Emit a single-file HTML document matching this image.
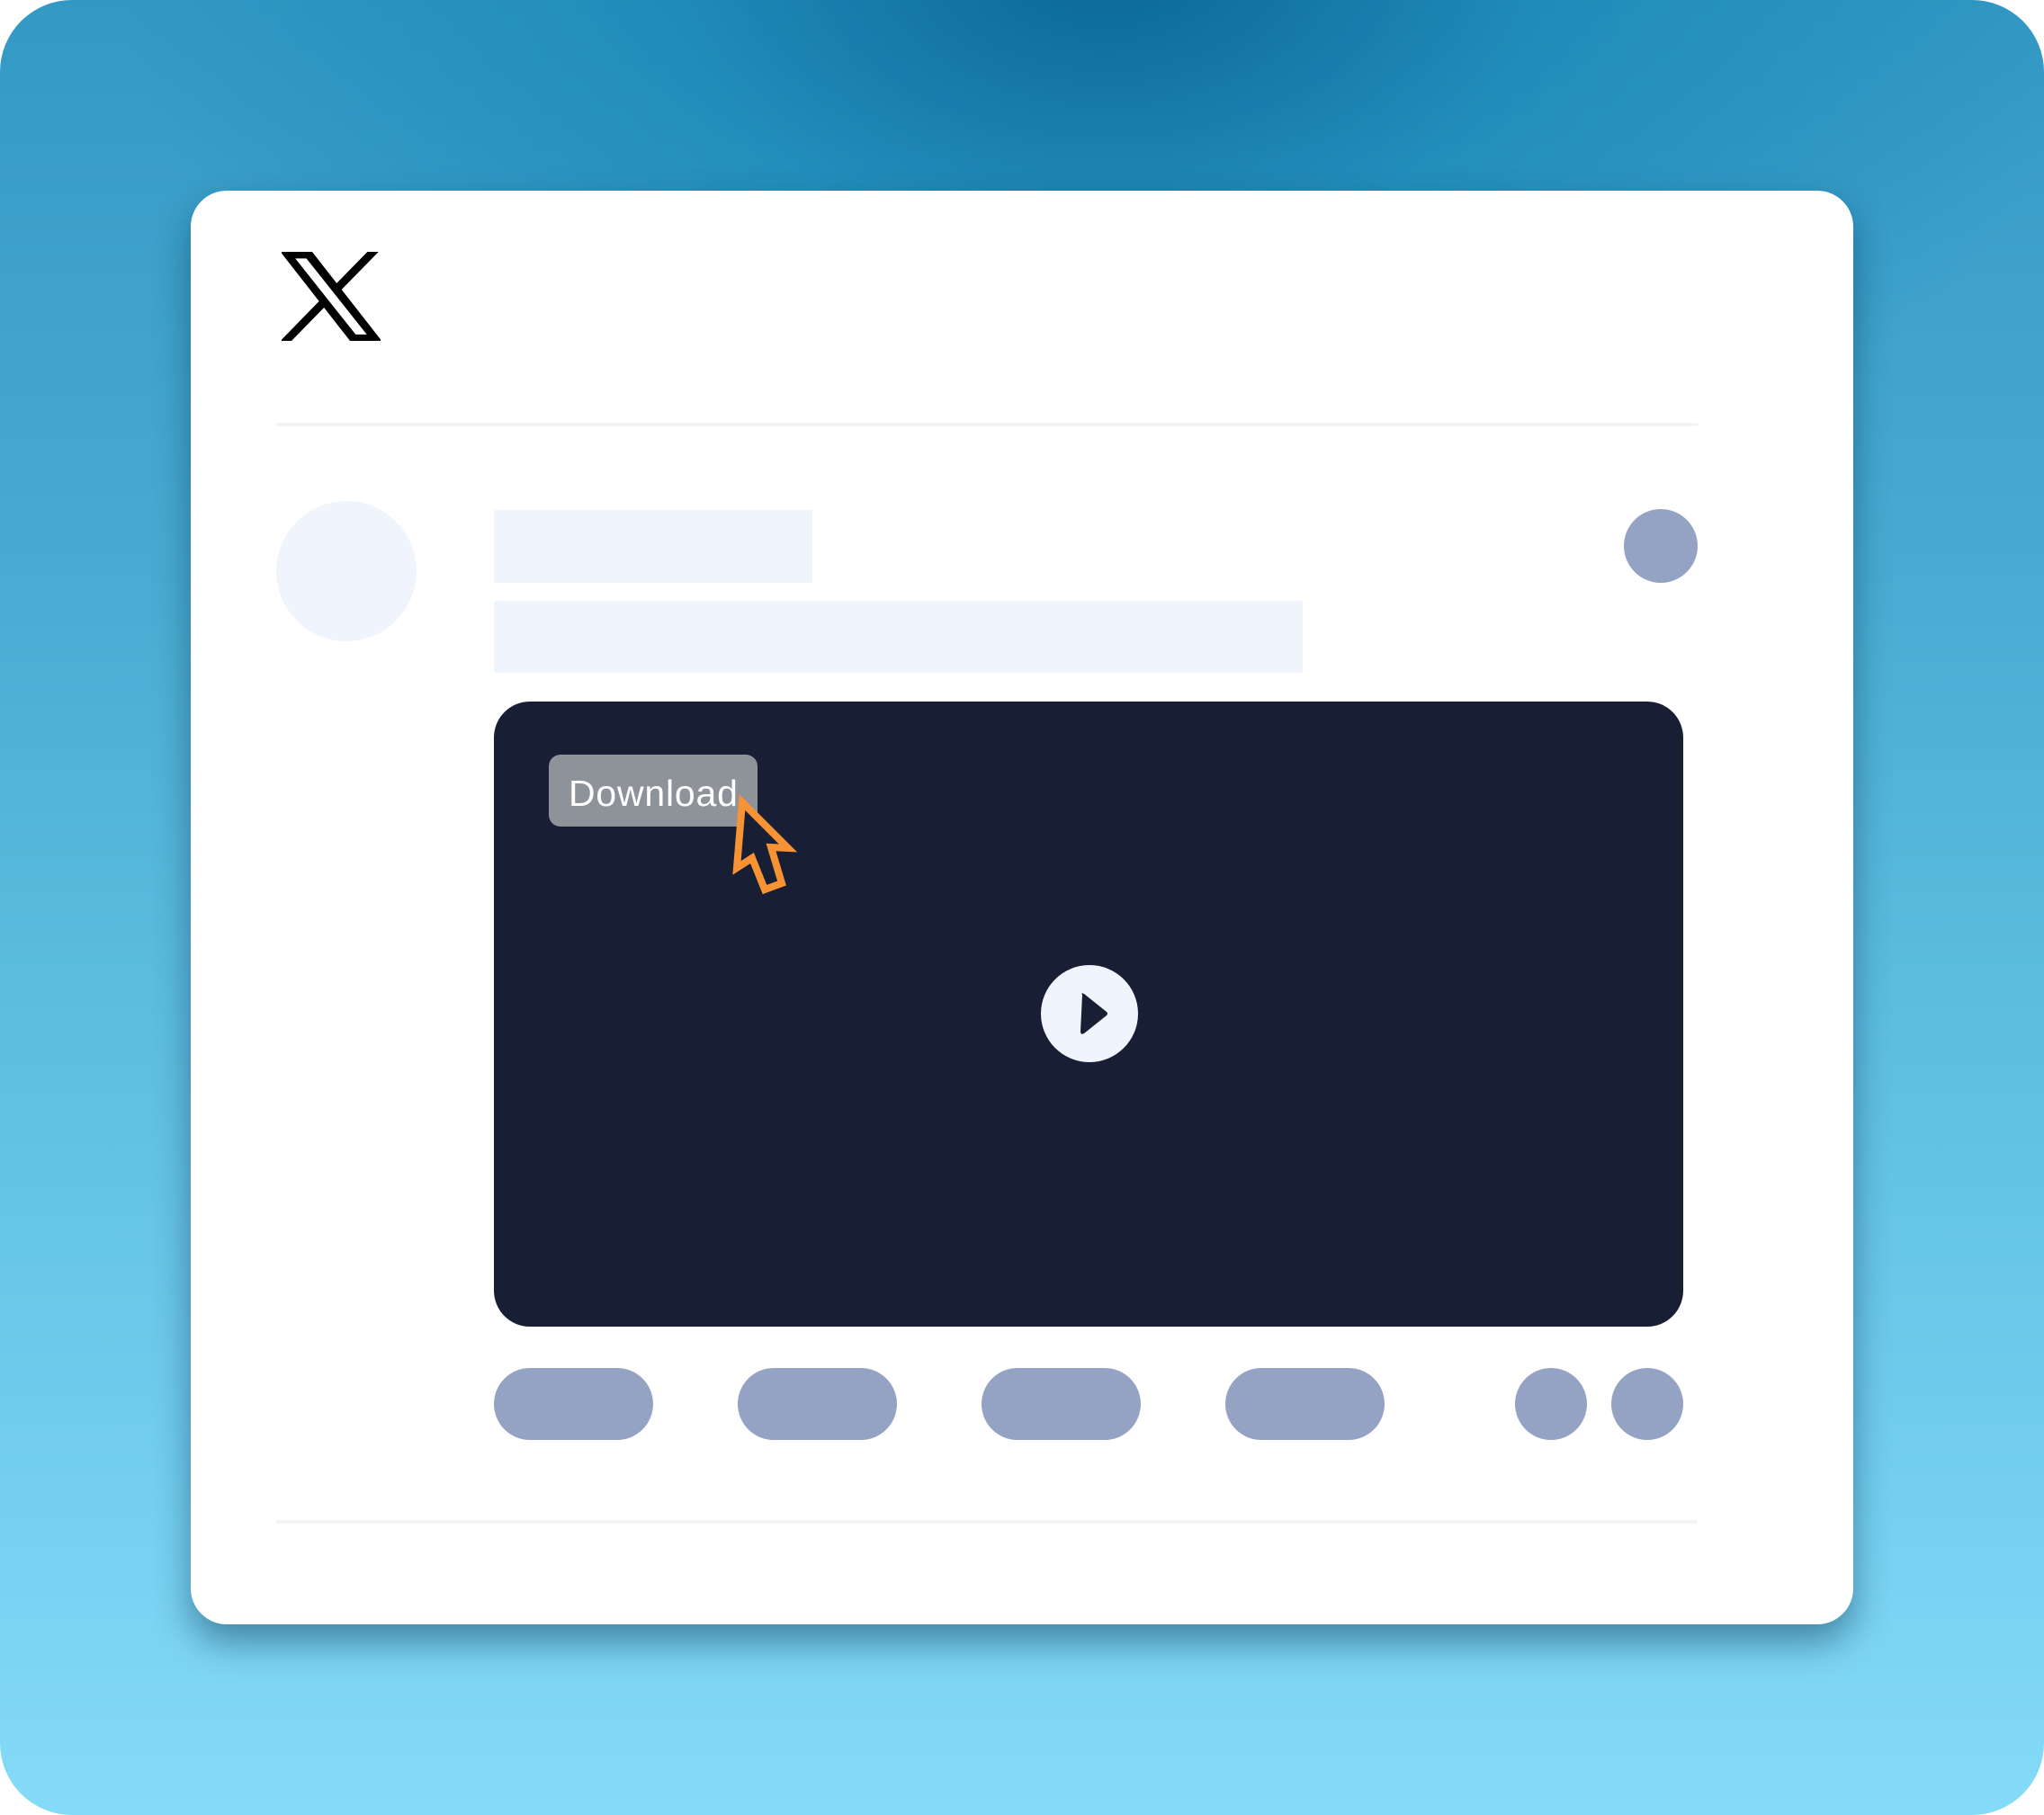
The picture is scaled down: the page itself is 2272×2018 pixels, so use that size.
<!DOCTYPE html>
<html><head><meta charset="utf-8"><style>
html,body{margin:0;padding:0;background:#fff;}
.bg{position:absolute;left:0;top:0;width:2272px;height:2018px;border-radius:80px;overflow:hidden;
background:radial-gradient(ellipse 1100px 700px at 1230px -40px,rgba(8,100,150,.95) 0%,rgba(20,130,180,.6) 45%,rgba(40,150,200,0) 100%),linear-gradient(180deg,#3399c4 0%,#48aad1 30%,#5cbde0 55%,#72cdee 80%,#84dbf7 100%);}
.card{position:absolute;left:212px;top:212px;width:1848px;height:1594px;background:#fff;border-radius:40px;box-shadow:0 20px 40px rgba(0,40,70,.45);}
.a{position:absolute;}
</style></head><body>
<div class="bg"></div>
<div class="card"></div>
<svg class="a" style="left:313px;top:280px" width="110" height="99" viewBox="0 0 1200 1227" preserveAspectRatio="none"><path fill="#000" stroke="#000" stroke-width="22" d="M714.163 519.284L1160.89 0H1055.03L667.137 450.887L357.328 0H0L468.492 681.821L0 1226.37H105.866L515.491 750.218L842.672 1226.37H1200L714.163 519.284ZM569.165 687.828L521.697 619.934L144.011 79.6944H306.615L611.412 515.685L658.88 583.579L1055.08 1150.3H892.476L569.165 687.828Z"/></svg>
<div class="a" style="left:307px;top:470px;width:1580px;height:4px;background:#f3f4f6"></div>
<div class="a" style="left:307px;top:557px;width:156px;height:156px;border-radius:50%;background:#f0f5fd"></div>
<div class="a" style="left:549px;top:567px;width:354px;height:81px;background:#f0f5fd"></div>
<div class="a" style="left:549px;top:668px;width:899px;height:80px;background:#f0f5fd"></div>
<div class="a" style="left:1805px;top:566px;width:82px;height:82px;border-radius:50%;background:#94a3c4"></div>
<div class="a" style="left:549px;top:780px;width:1322px;height:695px;border-radius:40px;background:#181f35"></div>
<div class="a" style="left:610px;top:839px;width:232px;height:80px;border-radius:13px;background:#8e9299;"></div>
<div class="a" style="left:632px;top:854px;font-family:'Liberation Sans',sans-serif;font-size:41px;color:#fff;line-height:56px;letter-spacing:0.8px">Download</div>
<svg class="a" style="left:0;top:0" width="2272" height="2018"><path d="M825 892 L876 943 L857 942 L869 982 L850 989 L836 954 L819 965 Z" fill="#181f35" stroke="#f79334" stroke-width="8" stroke-linejoin="miter"/>
<circle cx="1211" cy="1127" r="54" fill="#f0f5fd"/>
<path d="M1203 1106 Q1201 1103 1205 1105 L1230 1125 Q1232 1127 1230 1129 L1205 1149 Q1201 1151 1201 1147 Z" fill="#181f35"/></svg>
<div class="a" style="left:549px;top:1521px;width:177px;height:80px;border-radius:40px;background:#94a3c4"></div>
<div class="a" style="left:820px;top:1521px;width:177px;height:80px;border-radius:40px;background:#94a3c4"></div>
<div class="a" style="left:1091px;top:1521px;width:177px;height:80px;border-radius:40px;background:#94a3c4"></div>
<div class="a" style="left:1362px;top:1521px;width:177px;height:80px;border-radius:40px;background:#94a3c4"></div>
<div class="a" style="left:1684px;top:1521px;width:80px;height:80px;border-radius:50%;background:#94a3c4"></div>
<div class="a" style="left:1791px;top:1521px;width:80px;height:80px;border-radius:50%;background:#94a3c4"></div>
<div class="a" style="left:307px;top:1690px;width:1580px;height:4px;background:#f3f4f6"></div>
</body></html>
